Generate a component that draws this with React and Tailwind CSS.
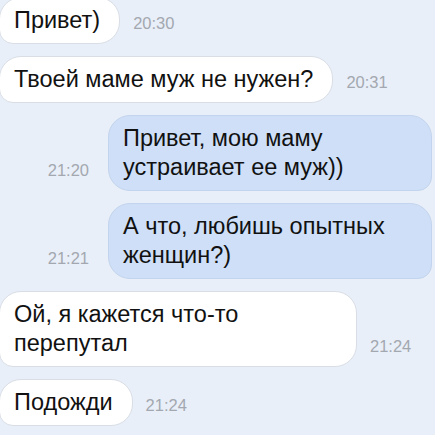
import React from "react";

const font = { fontFamily: '"Liberation Sans", Arial, sans-serif' };

function Left({ lines, time, width }) {
  return (
    <div className="flex items-end">
      <div
        className="relative rounded-[22px] rounded-bl-[14px] bg-white border border-[#d9dee6] pl-[14px] pr-[19px] py-[8px] text-[23.5px] leading-[29px] text-[#111]"
        style={width ? { width } : undefined}
      >
        {lines.map((l, i) => (
          <div key={i} className="whitespace-nowrap">{l}</div>
        ))}
      </div>
      <div className="ml-[13px] mb-[11px] text-[16.5px] leading-[20px] text-[#a3a8b0]">{time}</div>
    </div>
  );
}

function Right({ lines, time }) {
  return (
    <div className="flex items-end justify-end pr-[3px]">
      <div className="mr-[19px] mb-[11px] text-[16.5px] leading-[20px] text-[#a3a8b0]">{time}</div>
      <div className="relative w-[324px] rounded-[22px] rounded-br-[14px] bg-[#cedff7] border border-[#c3d4ee] pl-[14px] pr-4 py-[8px] text-[23.5px] leading-[29px] text-[#111]">
        {lines.map((l, i) => (
          <div key={i} className="whitespace-nowrap">{l}</div>
        ))}
      </div>
    </div>
  );
}

export default function App() {
  return (
    <div className="w-[435px] h-[435px] overflow-hidden bg-[#e9eff8]" style={font}>
      <div className="flex flex-col gap-[12px] mt-[-3px] ml-[-1px]">
        <Left lines={["Привет)"]} time="20:30" />
        <Left lines={["Твоей маме муж не нужен?"]} time="20:31" />
        <Right lines={["Привет, мою маму", "устраивает ее муж))"]} time="21:20" />
        <Right lines={["А что, любишь опытных", "женщин?)"]} time="21:21" />
        <Left lines={["Ой, я кажется что-то", "перепутал"]} time="21:24" width="358px" />
        <Left lines={["Подожди"]} time="21:24" />
      </div>
    </div>
  );
}
